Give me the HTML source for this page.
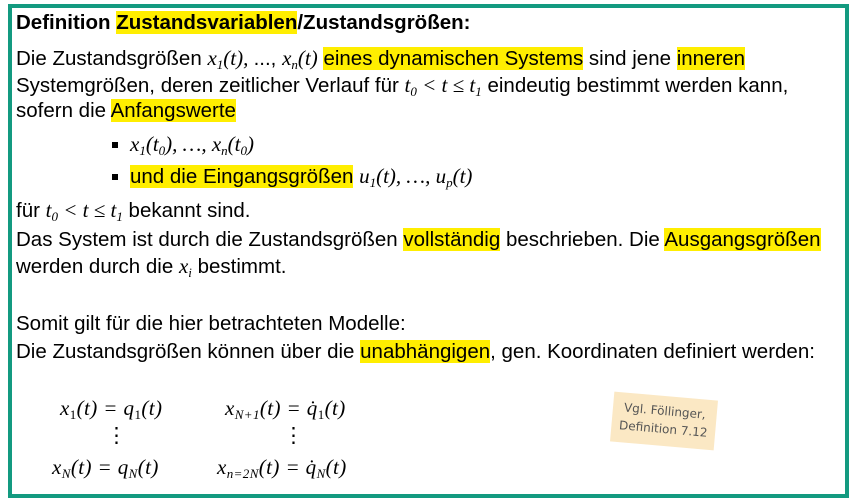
<!DOCTYPE html><html><head><style>
body{margin:0;width:854px;height:501px;background:#fff;position:relative;font-family:"Liberation Sans",sans-serif;font-size:20.5px;color:#000;overflow:hidden}
.box{position:absolute;left:8px;top:4px;width:833px;height:486px;border:4px solid #139a80}
.l{position:absolute;left:16px;white-space:nowrap}
.h{background:#ffee00}
i{font-family:"Liberation Serif",serif;font-style:italic;font-size:21px}
sub{font-size:13px;vertical-align:-4px}
.b{position:absolute;left:112px;width:6px;height:6px;background:#000}
.eq{position:absolute;font-family:"Liberation Serif",serif;font-style:italic;font-size:21px;white-space:nowrap;letter-spacing:0.4px}
.note{position:absolute;left:612px;top:396px;width:104px;height:44px;background:#fbe8c4;transform:rotate(5deg);font-family:"DejaVu Sans",sans-serif;font-size:12px;color:#555;text-align:center;padding-top:6px;line-height:18px}
</style></head><body>
<div class="box"></div>
<div class="l" style="top:11px;font-weight:bold">Definition <span class="h">Zustandsvariablen</span>/Zustandsgrößen:</div>
<div class="l" style="top:46px">Die Zustandsgrößen <i>x<sub>1</sub>(t), </i> ..., <i>x<sub>n</sub>(t)</i> <span class="h">eines dynamischen Systems</span> sind jene <span class="h">inneren</span></div>
<div class="l" style="top:73px">Systemgrößen, deren zeitlicher Verlauf für <i>t<sub>0</sub> &lt; t ≤ t<sub>1</sub></i> eindeutig bestimmt werden kann,</div>
<div class="l" style="top:99px">sofern die <span class="h">Anfangswerte</span></div>
<div class="b" style="top:142px"></div>
<div class="l" style="left:130px;top:132px"><i>x<sub>1</sub>(t<sub>0</sub>), …, x<sub>n</sub>(t<sub>0</sub>)</i></div>
<div class="b" style="top:174px"></div>
<div class="l" style="left:130px;top:164px"><span class="h">und die Eingangsgrößen</span> <i>u<sub>1</sub>(t), …, u<sub>p</sub>(t)</i></div>
<div class="l" style="top:198px">für <i>t<sub>0</sub> &lt; t ≤ t<sub>1</sub></i> bekannt sind.</div>
<div class="l" style="top:228px">Das System ist durch die Zustandsgrößen <span class="h">vollständig</span> beschrieben. Die <span class="h">Ausgangsgrößen</span></div>
<div class="l" style="top:254px">werden durch die <i>x<sub>i</sub></i> bestimmt.</div>
<div class="l" style="top:312px">Somit gilt für die hier betrachteten Modelle:</div>
<div class="l" style="top:340px">Die Zustandsgrößen können über die <span class="h">unabhängigen</span>, gen. Koordinaten definiert werden:</div>
<div class="eq" style="left:60px;top:396px">x<sub style="font-style:normal">1</sub>(t) = q<sub style="font-style:normal">1</sub>(t)</div>
<div class="eq" style="left:225px;top:396px">x<sub>N+1</sub>(t) = q̇<sub style="font-style:normal">1</sub>(t)</div>
<div class="eq" style="left:106px;top:423px;font-style:normal">⋮</div>
<div class="eq" style="left:283px;top:423px;font-style:normal">⋮</div>
<div class="eq" style="left:52px;top:455px">x<sub>N</sub>(t) = q<sub>N</sub>(t)</div>
<div class="eq" style="left:217px;top:455px">x<sub>n=2N</sub>(t) = q̇<sub>N</sub>(t)</div>
<div class="note">Vgl. Föllinger,<br>Definition 7.12</div>
</body></html>
